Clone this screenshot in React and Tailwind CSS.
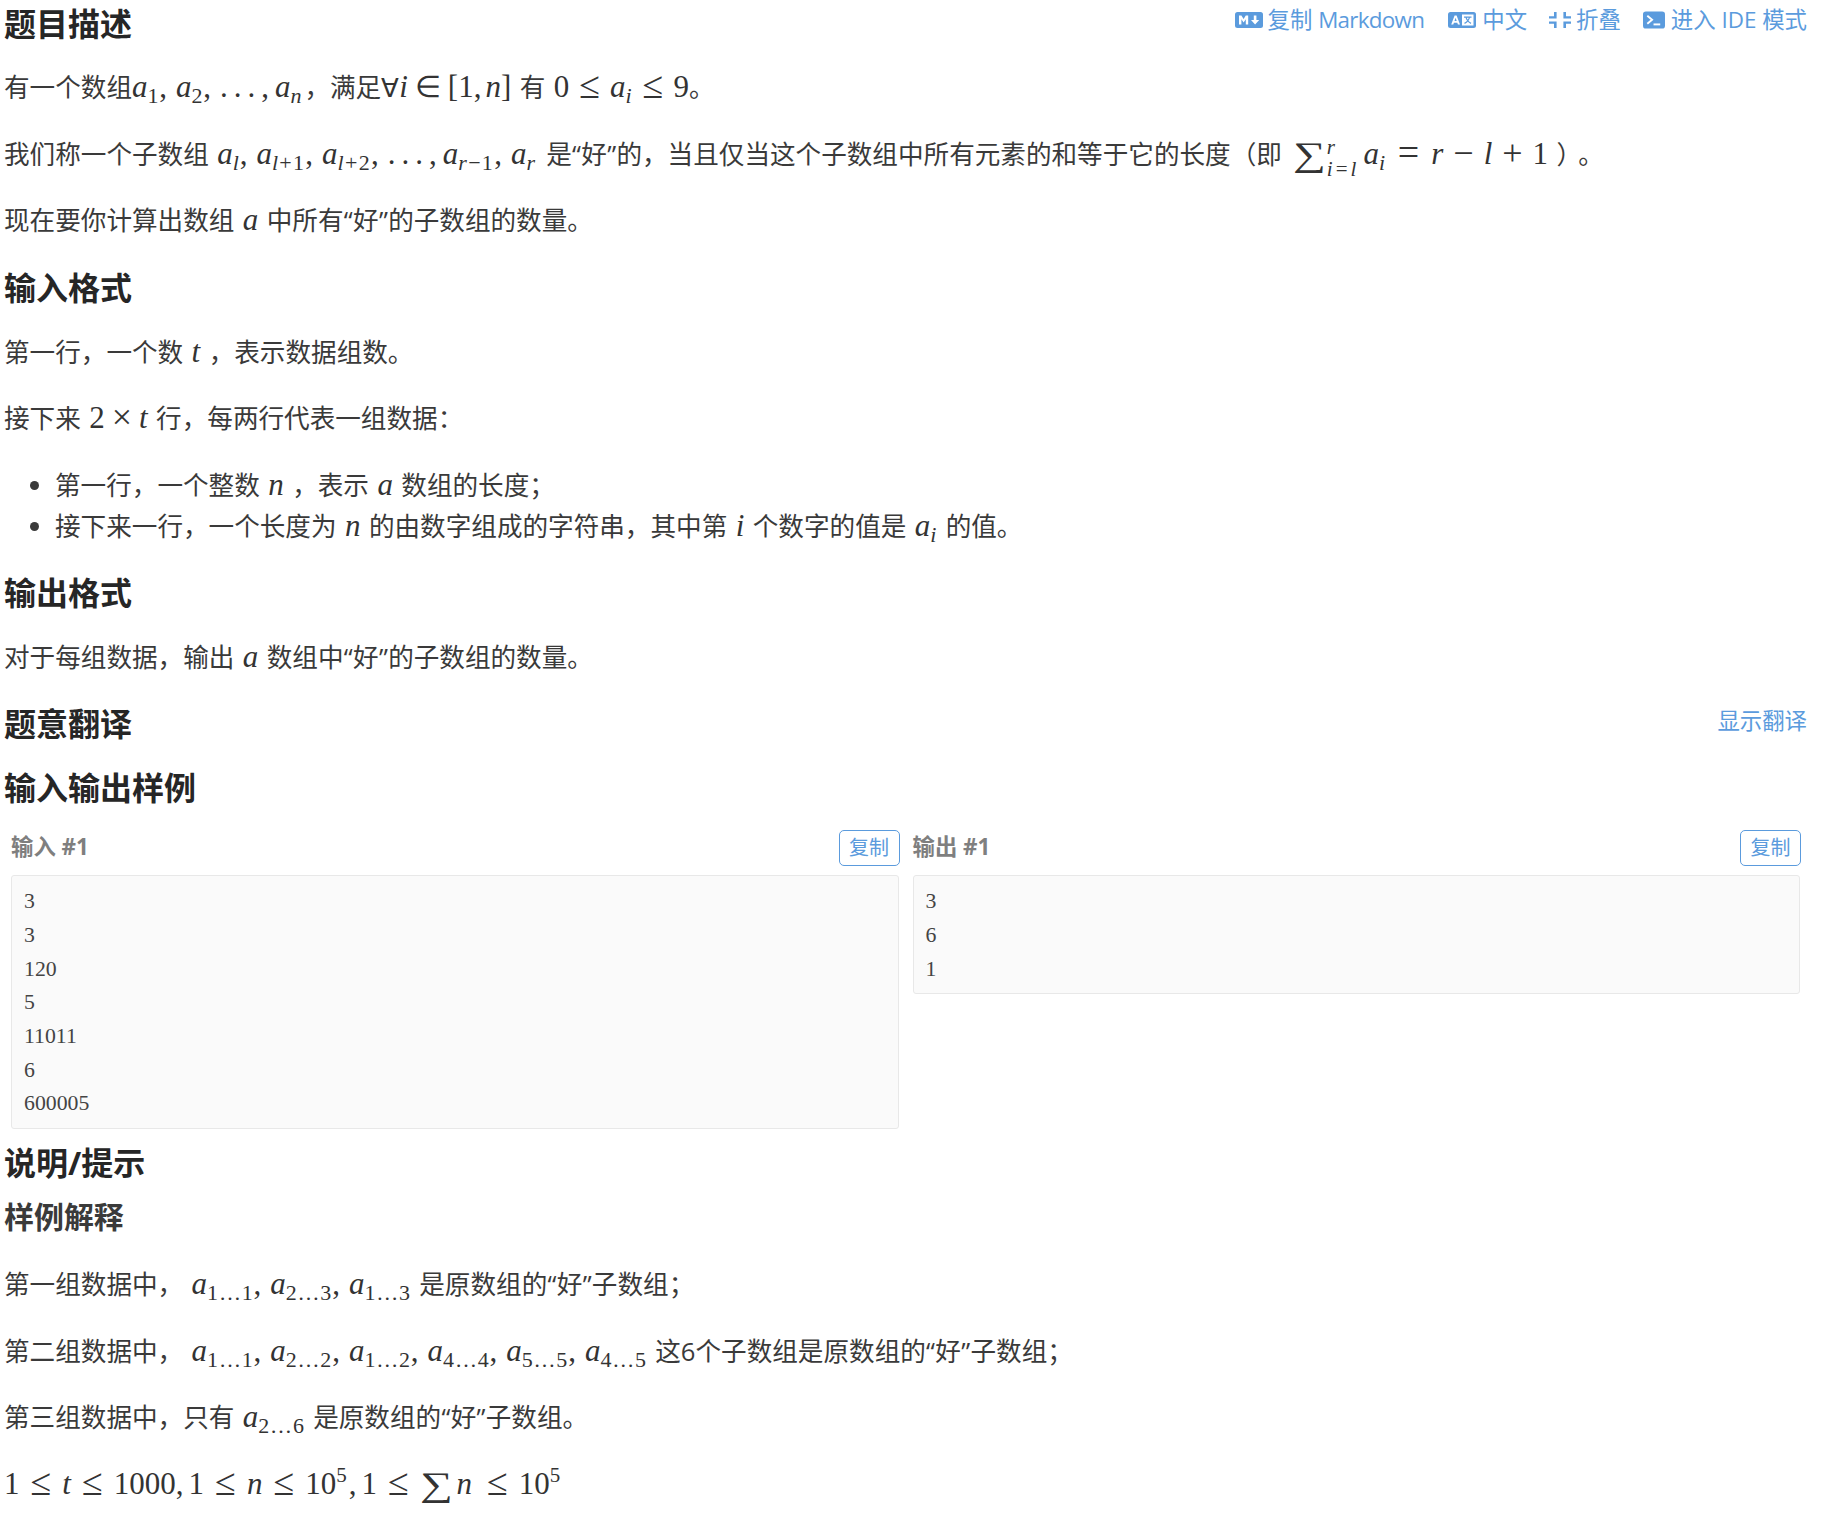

const Sub = ({ children }) => <span className="text-[22px] leading-[0] align-[-6px] not-italic tracking-[0.8px]">{children}</span>;
const SubW = ({ children }) => <span className="text-[22px] leading-[0] align-[-6px] not-italic tracking-[1.3px]">{children}</span>;
const M = ({ children }) => <span className="font-['Liberation_Serif',serif] text-[31px] leading-[0] text-[#333] [word-spacing:0]">{children}</span>;
const Rel = ({ c }) => <span className="text-[38px] leading-[0] align-[-1px] mx-[11px]">{c}</span>;
const RelT = ({ c }) => <span className="text-[38px] leading-[0] align-[-1px] mx-[10px]">{c}</span>;
const In = () => <span className="text-[30px] leading-[0] mx-[7px]">∈</span>;
const Eq = () => <span className="text-[38px] leading-[0] align-[-1px] mx-[12px]">=</span>;
const Bin = ({ c }) => <span className="text-[36px] leading-[0] align-[-1px] mx-[10px]">{c}</span>;
const Times = () => <span className="text-[36px] leading-[0] align-[-1px] mx-[7px]">×</span>;
const A = ({ s }) => <><i>a</i><Sub>{s}</Sub></>;
const AW = ({ s }) => <><i>a</i><SubW>{s}</SubW></>;
const C = () => <span className="mr-[9px]">,</span>;
const Dots = () => <><span className="tracking-[6px]">...</span><span className="mr-[6px]">,</span></>;
const Sigma = () => <span className="inline-block text-[40px] leading-[0] align-[-4px] mx-[2px] scale-x-[1.15] scale-y-[0.85]">∑</span>;
const Sup5 = () => <span className="text-[21px] leading-[0] align-[12px] mr-[2px]">5</span>;
const Q = ({ c }) => <span className="inline-block w-[9.5px] text-center leading-[0]">{c}</span>;
const Good = () => <><Q c="“" />好<Q c="”" /></>;

function MdIcon() {
  return (
    <svg viewBox="0 0 28 16" className="w-[28px] h-[16px] mr-[5px]">
      <rect width="28" height="16" rx="2.5" fill="#5b9bdd" />
      <path d="M4 12.5V3.5h2.4L8.6 7l2.2-3.5h2.4v9h-2.4V7.3L8.6 10.4 6.4 7.3v5.2z" fill="#fff" />
      <path d="M18.8 3.5h2.6v4.5h2.8l-4.1 4.5-4.1-4.5h2.8z" fill="#fff" />
    </svg>
  );
}
function LangIcon() {
  return (
    <svg viewBox="0 0 28 16" className="w-[28px] h-[16px] mr-[6px]">
      <rect width="28" height="16" rx="2.5" fill="#5b9bdd" />
      <rect x="14" y="2.5" width="11.5" height="11" fill="#fff" />
      <path d="M3.2 12.5 6.6 3.5h2L12 12.5H9.9l-.6-1.8H5.9l-.6 1.8zM6.5 9h2.2L7.6 5.7z" fill="#fff" />
      <path d="M16 5.2h7.5M18 5.2c.6 3 2.6 5 5 6.2M21.5 5.2c-.6 3-2.4 5-5 6.2" stroke="#5b9bdd" strokeWidth="1.2" fill="none" />
    </svg>
  );
}
function FoldIcon() {
  return (
    <svg viewBox="0 0 22 16" className="w-[22px] h-[16px] mr-[5px]" fill="#5b9bdd">
      <path d="M5 0h2.6v6.6H0V4.2h5zM14.4 0H17v4.2h5v2.4h-7.6zM0 9.4h7.6V16H5v-4.2H0zM14.4 9.4H22v2.4h-5V16h-2.6z" />
    </svg>
  );
}
function IdeIcon() {
  return (
    <svg viewBox="0 0 23 18" className="w-[22px] h-[18px] mr-[6px]">
      <rect width="23" height="18" rx="3" fill="#5b9bdd" />
      <path d="M4.5 4.5l5 4.2-5 4.2" stroke="#fff" strokeWidth="2" fill="none" />
      <path d="M11 13.6h7" stroke="#fff" strokeWidth="2" fill="none" />
    </svg>
  );
}

const H2 = ({ children, className = "" }) => (
  <h2 className={"text-[32px] leading-[40px] font-bold text-[#262626] " + className}>{children}</h2>
);
const P = ({ children, className = "" }) => <p className={"my-[25.6px] " + className}>{children}</p>;

const Action = ({ icon, children, className = "ml-[22px]" }) => (
  <a className={"flex items-center text-[#5b9bdd] text-[22.4px] leading-[34px] [word-spacing:0] " + className}>
    {icon}
    <span>{children}</span>
  </a>
);

function Sample({ title, lines }) {
  return (
    <div className="w-1/2 px-[7px]">
      <div className="flex justify-between items-start mb-[6px] h-[40px]">
        <span className="text-[22.4px] font-bold text-[#7f7f7f] mt-[1px] leading-[34px] [word-spacing:0]">{title}</span>
        <button className="h-[36px] w-[61px] rounded-[5px] border border-[#5b9bdd] text-[#5b9bdd] text-[20px] leading-[34px] mt-[1px] translate-x-[1px]">复制</button>
      </div>
      <pre className="bg-[#fafafa] border border-[#e8e8e8] rounded-[3px] pt-[9px] pb-[7px] px-[12px] text-[21.76px] leading-[33.7px] text-[#444] font-['Liberation_Serif',serif]">
        {lines.join("\n")}
      </pre>
    </div>
  );
}

export default function App() {
  return (
    <div className="bg-white min-h-[1525px] pl-[4px] pr-[20px] text-[25.6px] leading-[40.96px] text-[#3a3a3a] [word-spacing:1.8px] font-['Open_Sans','Noto_Sans_CJK_SC',sans-serif]">
      <div className="flex justify-between items-start">
        <H2 className="pt-[4px]">题目描述</H2>
        <div className="flex pt-[3px]">
          <Action icon={<MdIcon />}>复制 <span className="tracking-[-0.7px]">Markdown</span></Action>
          <Action icon={<LangIcon />} className="ml-[24px]">中文</Action>
          <Action icon={<FoldIcon />}>折叠</Action>
          <Action icon={<IdeIcon />}>进入 IDE 模式</Action>
        </div>
      </div>

      <P className="mt-[24px]">
        有一个数组
        <M><A s="1" /><C /><A s="2" /><C /><Dots /><span className="mr-[2px]"><A s={<i>n</i>} /></span></M>
        ，满足
        <M><span className="text-[26px]">∀</span><i>i</i><In />[1,<span className="ml-[4px]" /><i>n</i>]</M> 有 <M>0<RelT c="≤" /><A s={<i>i</i>} /><RelT c="≤" />9</M>。
      </P>
      <P>
        我们称一个子数组 <M><A s={<i>l</i>} /><C /><AW s={<><i>l</i>+1</>} /><C /><AW s={<><i>l</i>+2</>} /><C /><Dots /><AW s={<><i>r</i>−1</>} /><C /><span className="mr-[2px]"><A s={<i>r</i>} /></span></M> 是<Good />的，当且仅当这个子数组中所有元素的和等于它的长度（即<span className="mr-[3px]" />{" "}
        <M>
          <Sigma />
          <span className="inline-flex flex-col justify-center h-0 align-[10px] text-[21px] leading-[22px] tracking-[3px] ml-[1px] mr-[4px] overflow-visible">
            <i>r</i>
            <span><i>i</i>=<i>l</i></span>
          </span>
          <A s={<i>i</i>} /><Eq /><i>r</i><Bin c="−" /><i>l</i><Bin c="+" />1
        </M>
        {" "}<span className="mr-[9px]">）</span>。
      </P>
      <P>现在要你计算出数组 <M><i>a</i></M> 中所有<Good />的子数组的数量。</P>

      <H2 className="mt-[26px]">输入格式</H2>
      <P className="mt-[24.5px]">第一行，一个数 <M><i>t</i></M> ，表示数据组数。</P>
      <P>接下来 <M>2<Times /><i>t</i></M> 行，每两行代表一组数据：</P>
      <ul className="my-[25.6px] pl-[51px] list-disc">
        <li>第一行，一个整数 <M><i>n</i></M> ，表示 <M><i>a</i></M> 数组的长度；</li>
        <li>接下来一行，一个长度为 <M><i>n</i></M> 的由数字组成的字符串，其中第 <M><i>i</i></M> 个数字的值是 <M><A s={<i>i</i>} /></M> 的值。</li>
      </ul>

      <H2 className="mt-[25px]">输出格式</H2>
      <P className="mt-[24.5px]">对于每组数据，输出 <M><i>a</i></M> 数组中<Good />的子数组的数量。</P>

      <div className="flex justify-between items-start mt-[24px]">
        <H2>题意翻译</H2>
        <a className="text-[#5b9bdd] text-[22.4px] leading-[34px]">显示翻译</a>
      </div>

      <H2 className="mt-[24px]">输入输出样例</H2>
      <div className="flex mt-[21px]">
        <Sample title="输入 #1" lines={["3", "3", "120", "5", "11011", "6", "600005"]} />
        <Sample title="输出 #1" lines={["3", "6", "1"]} />
      </div>

      <H2 className="mt-[14px]">说明/提示</H2>
      <h3 className="text-[29.95px] leading-[38px] font-bold text-[#3a3a3a] mt-[15px]">样例解释</h3>
      <P className="mt-[29px]">第一组数据中， <M><A s="1…1" /><C /><A s="2…3" /><C /><A s="1…3" /></M> 是原数组的<Good />子数组；</P>
      <P>第二组数据中， <M><A s="1…1" /><C /><A s="2…2" /><C /><A s="1…2" /><C /><A s="4…4" /><C /><A s="5…5" /><C /><A s="4…5" /></M> 这6个子数组是原数组的<Good />子数组；</P>
      <P>第三组数据中，只有 <M><A s="2…6" /></M> 是原数组的<Good />子数组。</P>
      <P><M>1<Rel c="≤" /><i>t</i><Rel c="≤" />1000,<span className="ml-[5px]" />1<Rel c="≤" /><i>n</i><Rel c="≤" />10<Sup5 />,<span className="ml-[5px]" />1<Rel c="≤" /><Sigma /><span className="mx-[4px]"><i>n</i></span><Rel c="≤" />10<Sup5 /></M></P>
    </div>
  );
}
